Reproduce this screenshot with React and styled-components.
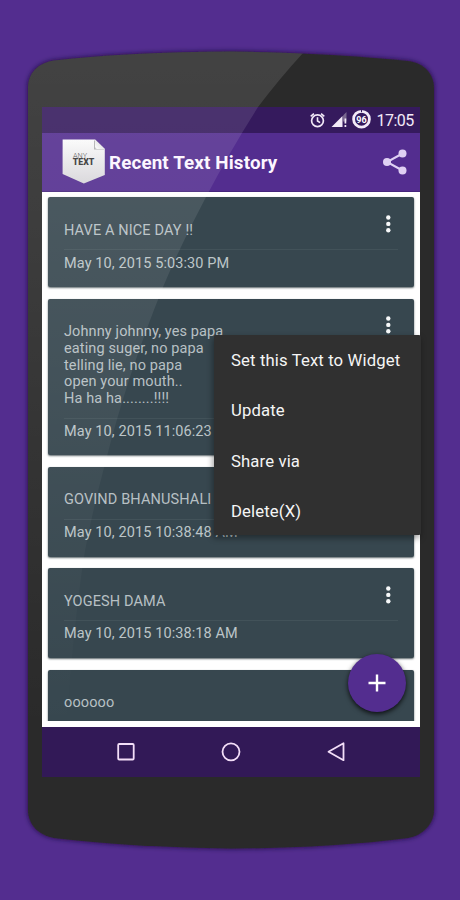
import React from "react";
import styled, { createGlobalStyle } from "styled-components";

const GlobalStyle = createGlobalStyle`
  * { box-sizing: border-box; }
  body { margin: 0; background: #532d8f; font-family: Roboto, "Liberation Sans", sans-serif; }
`;

const Stage = styled.main`
  position: relative;
  width: 460px;
  height: 900px;
  overflow: hidden;
  padding: 107px 40px 0 42px;
  background: #532d8f;
`;

const Backdrop = styled.svg`
  position: absolute;
  inset: 0;
  pointer-events: none;
`;

const Screen = styled.div`
  position: relative;
  display: flex;
  flex-direction: column;
  width: 378px;
  height: 670px;
`;

const StatusBar = styled.div`
  display: flex;
  align-items: center;
  justify-content: flex-end;
  flex: 0 0 26px;
  padding-right: 6px;
  background: #351a5d;
  color: #f3eaf8;
`;

const Clock = styled.span`
  width: 37.5px;
  margin-left: 5px;
  padding-top: 1px;
  font-size: 16px;
  line-height: 25px;
  letter-spacing: -0.5px;
  white-space: nowrap;
`;

const AppBar = styled.header`
  display: flex;
  align-items: center;
  flex: 0 0 58.5px;
  padding: 0 12px 0 20px;
  background: #532d8f;
  border-bottom: 1px solid #45247c;
`;

const Title = styled.h1`
  flex: 1;
  margin: 3px 0 0 4px;
  color: #fcf6ff;
  font-size: 18.8px;
  font-weight: 700;
  letter-spacing: 0.14px;
  white-space: nowrap;
`;

const List = styled.section`
  display: flex;
  flex-direction: column;
  gap: 11.4px;
  flex: 1;
  min-height: 0;
  overflow: hidden;
  padding: 5.8px 6px 0;
  background: #fff;
  border-bottom: 6px solid #fff;
`;

const Card = styled.article`
  display: grid;
  grid-template-columns: 1fr 20px;
  align-content: start;
  flex: none;
  min-height: 90px;
  padding: 25.5px 16px 14.8px;
  border-radius: 2px;
  background: #37474f;
  box-shadow: 0 1px 2px rgba(20, 35, 42, 0.7);
  color: #b7c0c4;
  font-size: 14.5px;
  line-height: 16.75px;
`;

const Message = styled.p`
  margin: 0;
  letter-spacing: 0.12px;
  white-space: pre-line;
`;

const MoreButton = styled.button`
  width: 20px;
  height: 20px;
  margin: -9px 0 -4px;
  padding: 0;
  border: 0;
  background: none;
  line-height: 0;
`;

const Stamp = styled.time`
  grid-column: 1 / -1;
  margin-top: 9.8px;
  padding-top: 5.2px;
  border-top: 1px solid #425259;
  font-size: 14.5px;
  letter-spacing: 0.1px;
  color: #bcc5c8;
`;

const NavBar = styled.nav`
  display: flex;
  align-items: center;
  justify-content: center;
  gap: 81px;
  flex: 0 0 50px;
  background: #321957;
`;

const Menu = styled.div`
  position: absolute;
  left: 172px;
  top: 227.6px;
  display: flex;
  flex-direction: column;
  width: 206.5px;
  height: 200.8px;
  border-radius: 2px;
  background: #303030;
  box-shadow: -1px 3px 6px rgba(0, 0, 0, 0.4);
`;

const MenuItem = styled.button`
  flex: 0 0 50.25px;
  padding: 2px 0 0 17px;
  border: 0;
  background: none;
  color: #f5f5f5;
  font: 16.7px Roboto, sans-serif;
  letter-spacing: 0.13px;
  text-align: left;
  white-space: nowrap;
`;

const AddButton = styled.button`
  position: absolute;
  left: 306px;
  top: 547px;
  display: grid;
  place-items: center;
  width: 58px;
  height: 58px;
  padding: 0;
  border: 0;
  border-radius: 50%;
  background: #532d8f;
  box-shadow: 0 2px 5px rgba(0, 0, 0, 0.8);
`;

const entries = [
  { text: "HAVE A NICE DAY !!", time: "May 10, 2015 5:03:30 PM" },
  {
    text: "Johnny johnny, yes papa\neating suger, no papa\ntelling lie, no papa\nopen your mouth..\nHa ha ha........!!!!",
    time: "May 10, 2015 11:06:23",
  },
  { text: "GOVIND BHANUSHALI", time: "May 10, 2015 10:38:48 AM" },
  { text: "YOGESH DAMA", time: "May 10, 2015 10:38:18 AM" },
  { text: "oooooo" },
];

const actions = ["Set this Text to Widget", "Update", "Share via", "Delete(X)"];

const bodyPath =
  "M28 88 C28 73 38 63 54 60.5 Q130 52 231 51.5 Q330 53 408 61 C424 63 434 74 434 88 L434 810 C434 823 424 835 408 838 Q330 848 231 848.5 Q130 847 54 838 C38 835 28 824 28 810 Z";

function PhoneBody() {
  return (
    <Backdrop width="460" height="900" viewBox="0 0 460 900">
      <defs>
        <filter id="bodyShadow" x="-10%" y="-10%" width="120%" height="120%">
          <feDropShadow dx="0" dy="0" stdDeviation="2.6" floodColor="#180630" floodOpacity="0.9" />
        </filter>
      </defs>
      <path d={bodyPath} fill="#2b2b2a" filter="url(#bodyShadow)" />
    </Backdrop>
  );
}

function Glare() {
  return (
    <Backdrop width="460" height="900" viewBox="0 0 460 900">
      <defs>
        <linearGradient id="glare" x1="0" y1="52" x2="0" y2="730" gradientUnits="userSpaceOnUse">
          <stop offset="0" stopColor="#fff" stopOpacity="0.115" />
          <stop offset="0.25" stopColor="#fff" stopOpacity="0.09" />
          <stop offset="0.6" stopColor="#fff" stopOpacity="0.045" />
          <stop offset="1" stopColor="#fff" stopOpacity="0" />
        </linearGradient>
        <clipPath id="bodyClip"><path d={bodyPath} /></clipPath>
      </defs>
      <path
        clipPath="url(#bodyClip)"
        fill="url(#glare)"
        d="M28 40 H314 L303 53 Q280 78 258 107 Q230 151 206 197 Q182 242 163 287 Q127 376 106 460 Q91 516 83 562 Q72 640 66 730 H28Z"
      />
    </Backdrop>
  );
}

function StatusIcons() {
  return (
    <svg width="63" height="24" viewBox="0 0 63 24" fill="none" stroke="#f3eaf8">
      <circle cx="8.5" cy="12.8" r="5.9" strokeWidth="1.7" />
      <path d="M8.5 9.2v3.8l2.6 1.7M1.7 8.4l3.2-2.7M15.300 8.4l-3.2-2.7" strokeWidth="1.6" />
      <path d="M22.500 19 33.500 8v11Z" fill="#f3eaf8" stroke="none" />
      <path d="M34 7.500 37.500 4v9.500H34Z" fill="#79678f" stroke="none" />
      <path d="M36.400 10.500v5M36.400 17v2" strokeWidth="1.700" />
      <circle cx="52.500" cy="11.200" r="7.900" strokeWidth="2.800" />
      <path d="M52.500 1.500v2.600" stroke="#351a5d" strokeWidth="1" />
      <text x="52.500" y="14.600" textAnchor="middle" fill="#fff" stroke="none" fontFamily="Roboto" fontWeight="700" fontSize="9">96</text>
    </svg>
  );
}

function Logo() {
  return (
    <svg width="43" height="45" viewBox="0 0 43 45">
      <defs>
        <linearGradient id="paper" x1="0" y1="0" x2="0" y2="1">
          <stop offset="0" stopColor="#fafafa" />
          <stop offset="0.5" stopColor="#e8e7e9" />
          <stop offset="1" stopColor="#d7d5d9" />
        </linearGradient>
        <linearGradient id="fold" x1="0" y1="1" x2="1" y2="0">
          <stop offset="0" stopColor="#fff" />
          <stop offset="1" stopColor="#ccc" />
        </linearGradient>
      </defs>
      <path d="M.6 .6H33L42.8 10V36L21.8 44.5 .6 35Z" fill="url(#paper)" />
      <path d="M32 1v9.5h10.500Z" fill="#777" opacity=".55" />
      <path d="M33 .6 42.800 10H35.200Q33 10 33 7.500Z" fill="url(#fold)" />
      <text x="11" y="18.500" fill="#444" fontFamily="Roboto" fontWeight="300" fontSize="7.400" textLength="14" lengthAdjust="spacingAndGlyphs">ANY</text>
      <text x="10.800" y="25.700" fill="#333" fontFamily="Roboto" fontWeight="900" fontSize="9.400" textLength="21.500" lengthAdjust="spacingAndGlyphs">TEXT</text>
    </svg>
  );
}

function ShareIcon() {
  return (
    <svg width="26" height="26" viewBox="0 0 26 26" fill="#dfd0f3">
      <path d="M20.500 4.500 5 13l15.500 8.500" fill="none" stroke="#dfd0f3" strokeWidth="2" />
      <circle cx="20.500" cy="4.600" r="4" />
      <circle cx="5" cy="13" r="4" />
      <circle cx="20.500" cy="21.400" r="4" />
    </svg>
  );
}

function Dots() {
  return (
    <svg width="20" height="20" viewBox="0 0 20 20" fill="#f7f9fa">
      <circle cx="10.300" cy="3.500" r="2.200" />
      <circle cx="10.300" cy="9.900" r="2.200" />
      <circle cx="10.300" cy="16.300" r="2.200" />
    </svg>
  );
}

export default function App() {
  return (
    <Stage>
      <GlobalStyle />
      <PhoneBody />
      <Screen>
        <StatusBar>
          <StatusIcons />
          <Clock>17:05</Clock>
        </StatusBar>
        <AppBar>
          <Logo />
          <Title>Recent Text History</Title>
          <ShareIcon />
        </AppBar>
        <List>
          {entries.map((entry) => (
            <Card key={entry.text}>
              <Message>{entry.text}</Message>
              <MoreButton aria-label="More"><Dots /></MoreButton>
              {entry.time && <Stamp>{entry.time}</Stamp>}
            </Card>
          ))}
        </List>
        <NavBar>
          <svg width="24" height="24" viewBox="0 0 24 24" fill="none" stroke="#f3def8" strokeWidth="1.8">
            <rect x="4.200" y="4" width="15.500" height="15.500" rx="1" />
          </svg>
          <svg width="24" height="24" viewBox="0 0 24 24" fill="none" stroke="#f3def8" strokeWidth="1.8">
            <circle cx="12" cy="11.800" r="8.500" />
          </svg>
          <svg width="24" height="24" viewBox="0 0 24 24" fill="none" stroke="#f3def8" strokeWidth="1.8" strokeLinejoin="round">
            <path d="M19.500 3.200v17L4.500 11.700Z" />
          </svg>
        </NavBar>
        <AddButton aria-label="Add">
          <svg width="18" height="18" viewBox="0 0 18 18" stroke="#fff" strokeWidth="2.400">
            <path d="M.5 9h17M9 .5v17" />
          </svg>
        </AddButton>
        <Menu>
          {actions.map((action) => <MenuItem key={action}>{action}</MenuItem>)}
        </Menu>
      </Screen>
      <Glare />
    </Stage>
  );
}
